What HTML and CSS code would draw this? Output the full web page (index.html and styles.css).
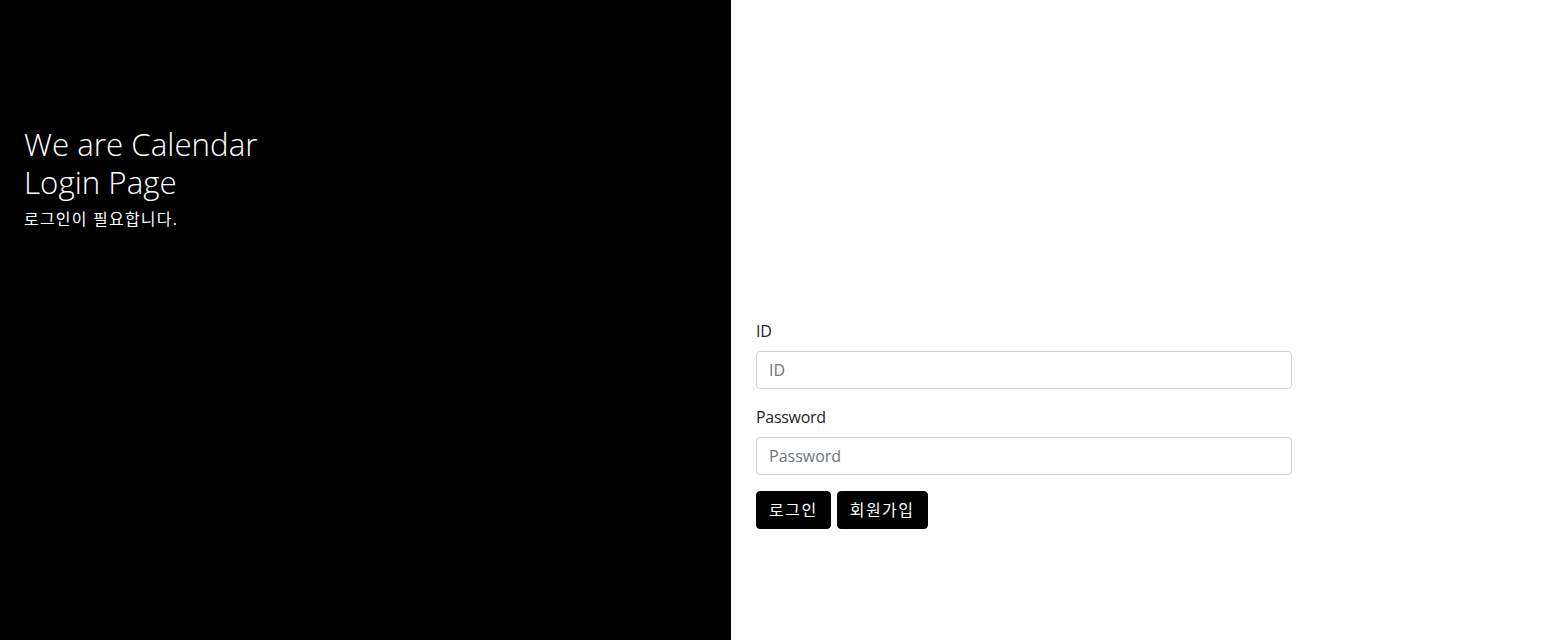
FILE: index.html
```html
<!DOCTYPE html>
<html lang="ko">
<head>
<meta charset="utf-8">
<title>Login</title>
<link rel="stylesheet" href="styles.css">
</head>
<body>
<div class="page">
  <aside class="sidebar">
    <div class="login-main-text">
      <h2 class="title">We are Calendar<br>Login Page</h2>
      <p class="subtitle">로그인이 필요합니다.</p>
    </div>
  </aside>
  <main class="main">
    <form class="login-form">
      <div class="form-group">
        <label class="label" for="uid">ID</label>
        <input class="form-control" id="uid" type="text" placeholder="ID">
      </div>
      <div class="form-group">
        <label class="label" for="pw">Password</label>
        <input class="form-control" id="pw" type="password" placeholder="Password">
      </div>
      <div class="actions">
        <button type="button" class="btn">로그인</button>
        <button type="button" class="btn">회원가입</button>
      </div>
    </form>
  </main>
</div>
</body>
</html>
```

FILE: styles.css
```css
html, body {
  margin: 0;
  padding: 0;
  height: 100%;
}
body {
  font-family: "Open Sans", "Noto Sans CJK KR", sans-serif;
  font-size: 16px;
  line-height: 1.5;
  color: #212529;
  background: #fff;
}
.page {
  display: flex;
  height: 640px;
}
.sidebar {
  width: 731px;
  flex: 0 0 731px;
  background: #000;
  color: #fff;
}
.login-main-text {
  padding: 125px 24px 0;
}
.title {
  margin: 0;
  font-size: 31.3px;
  font-weight: 300;
  line-height: 38px;
}
.subtitle {
  margin: 6px 0 0;
  font-size: 16px;
  line-height: 24px;
  letter-spacing: 1.2px;
}
.main {
  flex: 1;
  padding: 0 25px;
}
.login-form {
  width: 536px;
  margin-top: 319px;
}
.form-group {
  margin-bottom: 16px;
}
.label {
  display: block;
  margin-bottom: 8px;
  font-size: 16px;
  line-height: 24px;
  letter-spacing: -0.3px;
}
.form-control {
  display: block;
  box-sizing: border-box;
  width: 100%;
  height: 38px;
  padding: 6px 12px;
  font-family: inherit;
  font-size: 16px;
  line-height: 24px;
  color: #495057;
  background: #fff;
  border: 1px solid #ced4da;
  border-radius: 4px;
  outline: none;
}
.form-control::placeholder {
  color: #6c757d;
}
.actions {
  display: flex;
  gap: 6px;
}
.btn {
  height: 38px;
  padding: 6px 12px;
  font-family: inherit;
  font-size: 16px;
  line-height: 24px;
  letter-spacing: 1.5px;
  color: #fff;
  background: #000;
  border: 1px solid #000;
  border-radius: 4px;
  cursor: pointer;
}
```
